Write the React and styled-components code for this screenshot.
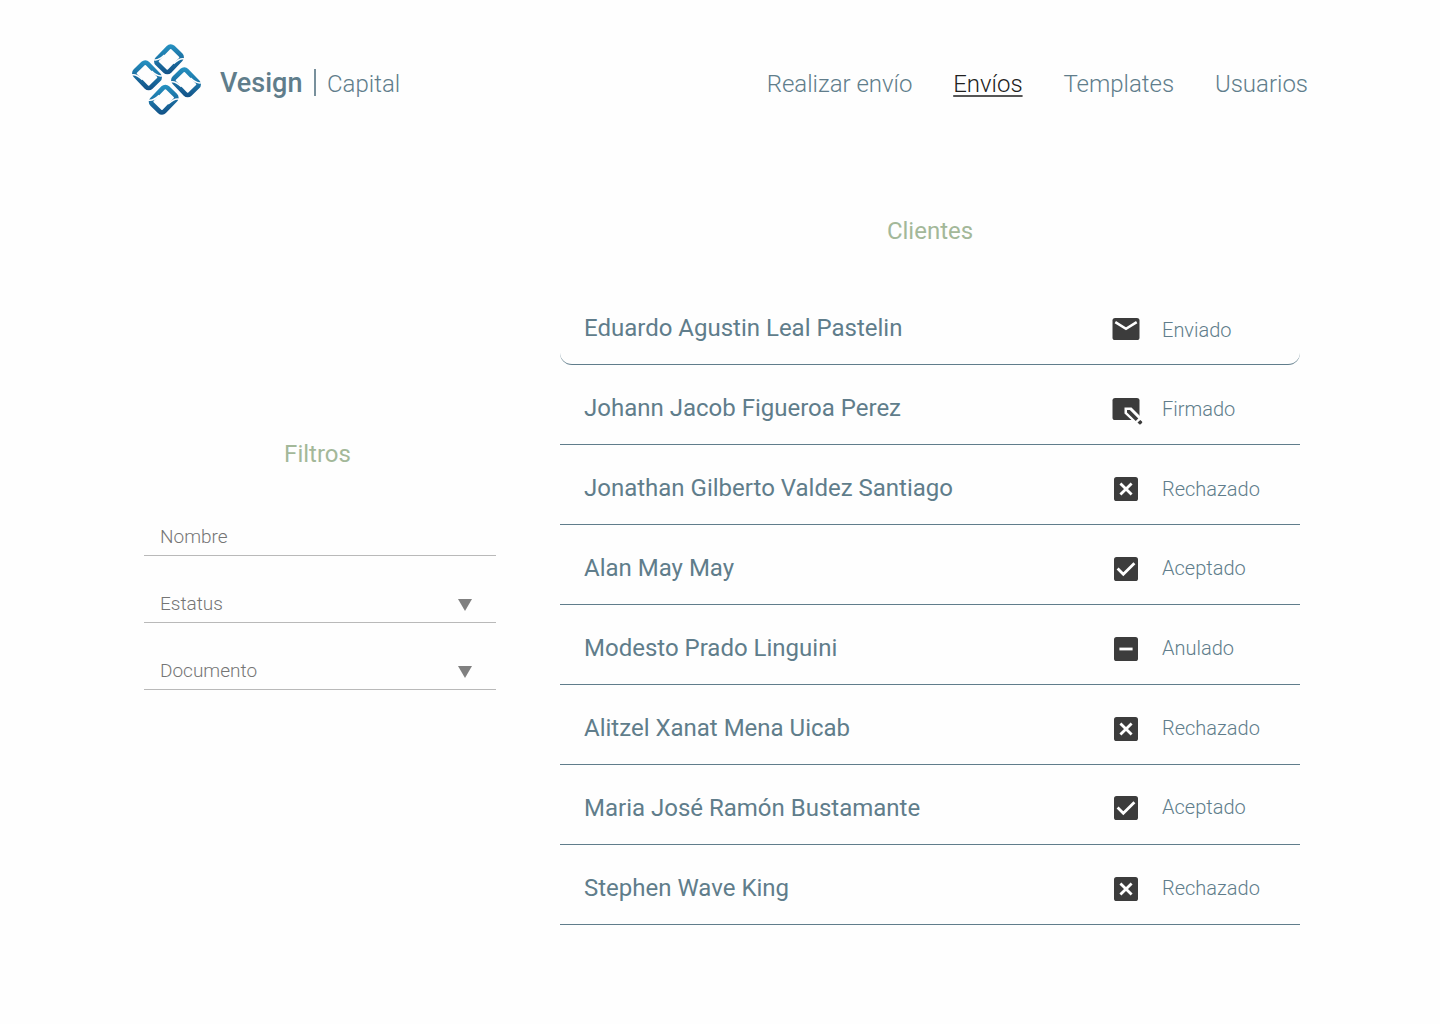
import React from "react";
import styled, { createGlobalStyle } from "styled-components";

const GlobalStyle = createGlobalStyle`
  *, *::before, *::after { box-sizing: border-box; }
  body { margin: 0; background: #fefefe; font-family: Roboto, "Liberation Sans", sans-serif; }
`;

const Page = styled.div`
  width: 1440px;
  height: 1024px;
  overflow: hidden;
`;

const Header = styled.header`
  display: flex;
  align-items: center;
  justify-content: space-between;
  height: 166px;
  padding: 0 132px 8px 125px;
`;

const Brand = styled.div`
  display: flex;
  align-items: center;
`;

const BrandName = styled.span`
  margin: 7px 0 0 11px;
  font-size: 27px;
  line-height: 32px;
  font-weight: 500;
  color: #607d8b;
`;

const BrandDivider = styled.span`
  width: 2px;
  height: 27px;
  margin: 6px 11px 0 11.6px;
  background: #78909c;
`;

const BrandUnit = styled.span`
  margin-top: 10px;
  font-size: 24px;
  line-height: 28px;
  font-weight: 300;
  color: #607d8b;
`;

const Nav = styled.nav`
  display: flex;
  gap: 40.8px;
  margin-top: 10px;
`;

const NavLink = styled.a`
  font-size: 24px;
  line-height: 28px;
  font-weight: 300;
  color: ${(p) => (p.$active ? "#212121" : "#607d8b")};
  text-decoration: ${(p) => (p.$active ? "underline" : "none")};
  text-decoration-thickness: 1.5px;
  text-decoration-color: #555;
  text-underline-offset: 2.5px;
`;

const Main = styled.main`
  display: grid;
  grid-template-columns: 352px 740px;
  column-gap: 64px;
  padding-left: 144px;
`;

const Filters = styled.section`
  padding-top: 274px;
`;

const Title = styled.h2`
  margin: 0;
  font-size: 24px;
  line-height: 28px;
  font-weight: 400;
  text-align: center;
  color: #a3b899;
`;

const FilterTitle = styled(Title)`
  padding-right: 5px;
  margin-bottom: 49px;
`;

const Field = styled.div`
  display: flex;
  align-items: center;
  justify-content: space-between;
  height: 39px;
  margin-bottom: 28px;
  padding: 0 24px 0 16px;
  border-bottom: 1px solid #b9b9b9;
  font-size: 19px;
  font-weight: 300;
  color: #757575;
`;

const Caret = styled.span`
  width: 14px;
  height: 12px;
  margin-top: 4px;
  background: #808080;
  clip-path: polygon(0 0, 100% 0, 50% 100%);
`;

const Clients = styled.section`
  padding-top: 51px;
`;

const List = styled.ul`
  list-style: none;
  margin: 40px 0 0;
  padding: 0;
`;

const Row = styled.li`
  display: grid;
  grid-template-columns: 1fr 54px 138px;
  align-items: start;
  height: 80px;
  padding: 29px 0 0 24px;
  border-bottom: 1px solid #607d8b;
  border-radius: ${(p) => (p.$rounded ? "0 0 12px 12px" : "0")};
`;

const ClientName = styled.span`
  font-size: 24px;
  line-height: 28px;
  color: #607d8b;
`;

const Status = styled.span`
  font-size: 20px;
  line-height: 24px;
  margin-top: ${(p) => 3 + p.$shift}px;
  font-weight: 300;
  color: #607d8b;
`;

const Glyph = styled.svg`
  display: block;
  width: 32px;
  height: 32px;
  margin: ${(p) => -1 + p.$shift}px 0 0 1.7px;
`;

const DARK = "#3c3c3c";

function ChainLink({ x, y, mirrored }) {
  return (
    <g transform={`translate(${x} ${y}) scale(${mirrored ? -1.07 : 1.07} 1.07) rotate(-46)`}>
      <rect x="-31.5" y="-24" width="63" height="48" rx="9" fill="none" stroke="url(#linkBlue)" strokeWidth="13" />
      <path d="M-31 -31 Q-26 -19 0 -17.5 M31 31 Q26 19 0 17.5" fill="none" stroke="#fefefe" strokeWidth="4.4" />
    </g>
  );
}

function Logo() {
  return (
    <svg width="84" height="84" viewBox="0 0 252 252">
      <defs>
        <linearGradient id="linkBlue" x1="1" y1="0" x2="0" y2="1">
          <stop offset="0" stopColor="#2590c0" />
          <stop offset="1" stopColor="#135489" />
        </linearGradient>
      </defs>
      <ChainLink x={132} y={67} />
      <ChainLink x={66} y={115} mirrored />
      <ChainLink x={183} y={136} mirrored />
      <ChainLink x={116} y={188} />
    </svg>
  );
}

function StatusIcon({ kind, shift }) {
  if (kind === "Enviado")
    return (
      <Glyph viewBox="0 0 32 32" $shift={shift}>
        <rect x="2.5" y="5" width="27" height="22" rx="2.6" fill={DARK} />
        <path d="M5.3 9.2 L16 15.8 L26.7 9.2" fill="none" stroke="#fff" strokeWidth="2.6" />
      </Glyph>
    );
  if (kind === "Firmado")
    return (
      <Glyph viewBox="0 0 32 32" overflow="visible" $shift={shift}>
        <rect x="2.5" y="5" width="27" height="22" rx="2.6" fill={DARK} />
        <path d="M14.5 14.5 H21.5 L35 28 L29 34 L14.5 20.5z" fill="#fefefe" />
        <path d="M17 17 H19.8 L28.3 25.5 L25.7 28.1 L17 19.6z" fill={DARK} />
        <path d="M30.3 26.9 l1.7 1.7 q.6 .7 0 1.3 l-1.4 1.4 q-.7 .6 -1.3 0 l-1.8 -1.8z" fill={DARK} />
      </Glyph>
    );
  return (
    <Glyph viewBox="0 0 32 32" $shift={shift}>
      <rect x="4" y="4" width="24" height="24" rx="2.6" fill={DARK} />
      {kind === "Rechazado" && <path d="M10.4 10.4 L21.6 21.6 M21.6 10.4 L10.4 21.6" stroke="#fff" strokeWidth="2.8" />}
      {kind === "Aceptado" && <path d="M7.6 15.6 L13.3 21.2 L24.4 10.2" fill="none" stroke="#fff" strokeWidth="2.8" />}
      {kind === "Anulado" && <path d="M9.4 16 H22.6" stroke="#fff" strokeWidth="2.8" />}
    </Glyph>
  );
}

const clients = [
  { name: "Eduardo Agustin Leal Pastelin", status: "Enviado", textShift: 1 },
  { name: "Johann Jacob Figueroa Perez", status: "Firmado" },
  { name: "Jonathan Gilberto Valdez Santiago", status: "Rechazado" },
  { name: "Alan May May", status: "Aceptado", textShift: -1 },
  { name: "Modesto Prado Linguini", status: "Anulado", textShift: -1 },
  { name: "Alitzel Xanat Mena Uicab", status: "Rechazado", textShift: -1 },
  { name: "Maria José Ramón Bustamante", status: "Aceptado", textShift: -2, iconShift: -1 },
  { name: "Stephen Wave King", status: "Rechazado", textShift: -1 },
];

export default function App() {
  return (
    <Page>
      <GlobalStyle />
      <Header>
        <Brand>
          <Logo />
          <BrandName>Vesign</BrandName>
          <BrandDivider />
          <BrandUnit>Capital</BrandUnit>
        </Brand>
        <Nav>
          <NavLink>Realizar envío</NavLink>
          <NavLink $active>Envíos</NavLink>
          <NavLink>Templates</NavLink>
          <NavLink>Usuarios</NavLink>
        </Nav>
      </Header>
      <Main>
        <Filters>
          <FilterTitle>Filtros</FilterTitle>
          <Field>Nombre</Field>
          <Field>Estatus<Caret /></Field>
          <Field>Documento<Caret /></Field>
        </Filters>
        <Clients>
          <Title>Clientes</Title>
          <List>
            {clients.map(({ name, status, textShift = 0, iconShift = 0 }, i) => (
              <Row key={name} $rounded={i === 0}>
                <ClientName>{name}</ClientName>
                <StatusIcon kind={status} shift={iconShift} />
                <Status $shift={textShift}>{status}</Status>
              </Row>
            ))}
          </List>
        </Clients>
      </Main>
    </Page>
  );
}
